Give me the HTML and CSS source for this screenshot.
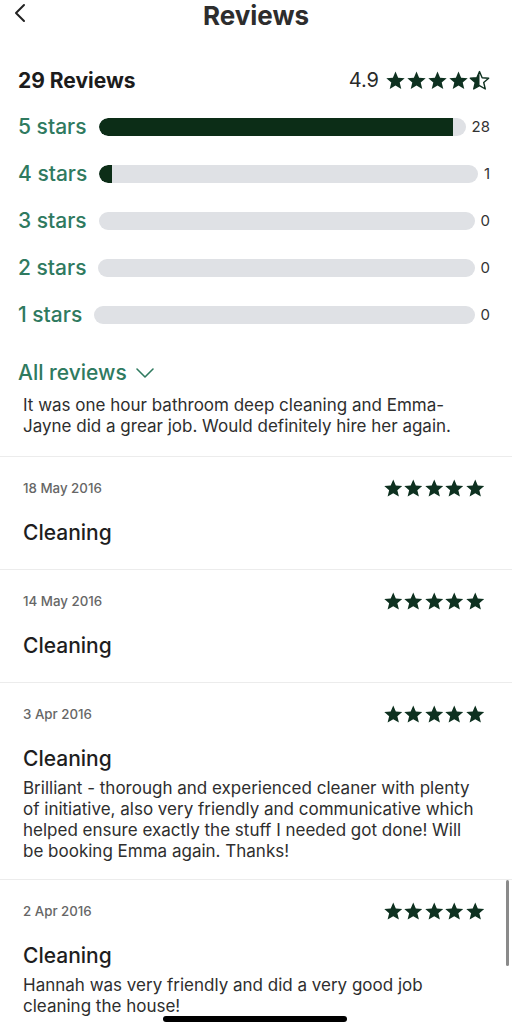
FILE: index.html
```html
<!DOCTYPE html>
<html lang="en">
<head>
    <meta charset="UTF-8">
    <meta name="viewport" content="width=device-width, initial-scale=1.0">
    <title>Reviews</title>
    <link rel="stylesheet" href="styles.css">
</head>
<body>
    <svg width="0" height="0" class="defs">
        <defs>
            <symbol id="star" viewBox="0 0 24 24">
                <path d="M12 1.8l3 7 7.5.6-5.7 4.9 1.8 7.4L12 17.8l-6.6 3.9 1.8-7.4L1.5 9.4 9 8.8z"/>
            </symbol>
            <clipPath id="halfClip">
                <rect x="0" y="0" width="12" height="24"/>
            </clipPath>
        </defs>
    </svg>

    <div class="topbar">
        <svg class="back" width="12" height="20" viewBox="0 0 12 20">
            <path d="M10 2L2 10l8 8" fill="none" stroke="#222" stroke-width="2" stroke-linecap="round" stroke-linejoin="round"/>
        </svg>
        <h1>Reviews</h1>
    </div>

    <div class="summary">
        <span class="total">29 Reviews</span>
        <span class="rating">
            4.9
            <span class="stars">
                <svg><use href="#star"/></svg>
                <svg><use href="#star"/></svg>
                <svg><use href="#star"/></svg>
                <svg><use href="#star"/></svg>
                <svg viewBox="0 0 24 24" class="half">
                    <path d="M12 1.8l3 7 7.5.6-5.7 4.9 1.8 7.4L12 17.8l-6.6 3.9 1.8-7.4L1.5 9.4 9 8.8z" fill="none" stroke="#0e3120" stroke-width="1.6" stroke-linejoin="round"/>
                    <path d="M12 1.8l3 7 7.5.6-5.7 4.9 1.8 7.4L12 17.8l-6.6 3.9 1.8-7.4L1.5 9.4 9 8.8z" clip-path="url(#halfClip)"/>
                </svg>
            </span>
        </span>
    </div>

    <div class="breakdown">
        <div class="bar-row">
            <span class="bar-label">5 stars</span>
            <div class="bar"><div class="bar-fill" style="width: 96.6%"></div></div>
            <span class="bar-count">28</span>
        </div>
        <div class="bar-row">
            <span class="bar-label">4 stars</span>
            <div class="bar"><div class="bar-fill" style="width: 3.4%"></div></div>
            <span class="bar-count">1</span>
        </div>
        <div class="bar-row">
            <span class="bar-label">3 stars</span>
            <div class="bar"><div class="bar-fill" style="width: 0%"></div></div>
            <span class="bar-count">0</span>
        </div>
        <div class="bar-row">
            <span class="bar-label">2 stars</span>
            <div class="bar"><div class="bar-fill" style="width: 0%"></div></div>
            <span class="bar-count">0</span>
        </div>
        <div class="bar-row">
            <span class="bar-label">1 stars</span>
            <div class="bar"><div class="bar-fill" style="width: 0%"></div></div>
            <span class="bar-count">0</span>
        </div>
    </div>

    <div class="filter">
        All reviews
        <svg width="20" height="12" viewBox="0 0 20 12">
            <path d="M2 2l8 8 8-8" fill="none" stroke="#2f7a5f" stroke-width="1.6" stroke-linecap="round" stroke-linejoin="round"/>
        </svg>
    </div>
    <p class="intro">It was one hour bathroom deep cleaning and Emma-<br>Jayne did a grear job. Would definitely hire her again.</p>

    <div class="review">
        <div class="review-head">
            <span class="date">18 May 2016</span>
            <span class="stars small">
                <svg><use href="#star"/></svg><svg><use href="#star"/></svg><svg><use href="#star"/></svg><svg><use href="#star"/></svg><svg><use href="#star"/></svg>
            </span>
        </div>
        <h2 class="review-title">Cleaning</h2>
    </div>

    <div class="review">
        <div class="review-head">
            <span class="date">14 May 2016</span>
            <span class="stars small">
                <svg><use href="#star"/></svg><svg><use href="#star"/></svg><svg><use href="#star"/></svg><svg><use href="#star"/></svg><svg><use href="#star"/></svg>
            </span>
        </div>
        <h2 class="review-title">Cleaning</h2>
    </div>

    <div class="review">
        <div class="review-head">
            <span class="date">3 Apr 2016</span>
            <span class="stars small">
                <svg><use href="#star"/></svg><svg><use href="#star"/></svg><svg><use href="#star"/></svg><svg><use href="#star"/></svg><svg><use href="#star"/></svg>
            </span>
        </div>
        <h2 class="review-title">Cleaning</h2>
        <p class="review-body">Brilliant - thorough and experienced cleaner with plenty of initiative, also very friendly and communicative which helped ensure exactly the stuff I needed got done! Will be booking Emma again. Thanks!</p>
    </div>

    <div class="review">
        <div class="review-head">
            <span class="date">2 Apr 2016</span>
            <span class="stars small">
                <svg><use href="#star"/></svg><svg><use href="#star"/></svg><svg><use href="#star"/></svg><svg><use href="#star"/></svg><svg><use href="#star"/></svg>
            </span>
        </div>
        <h2 class="review-title">Cleaning</h2>
        <p class="review-body">Hannah was very friendly and did a very good job cleaning the house!</p>
    </div>

    <div class="scrollbar"></div>
    <div class="home-indicator"></div>
</body>
</html>
```

FILE: styles.css
```css
body {
    margin: 0;
    font-family: 'Inter', 'Noto Sans', sans-serif;
    background: #fff;
    color: #222;
    height: 1024px;
    overflow: hidden;
}
.defs {
    position: absolute;
}
.topbar {
    height: 34px;
    display: flex;
    align-items: flex-start;
    justify-content: center;
    position: relative;
}
.back {
    position: absolute;
    left: 14px;
    top: 3px;
}
h1 {
    margin: 1px 0 0;
    font-size: 26px;
    line-height: 30px;
    font-weight: 700;
    color: #2d2d2d;
}
.summary {
    display: flex;
    justify-content: space-between;
    align-items: center;
    padding: 34px 22px 0 18px;
    height: 24px;
}
.total {
    font-size: 21px;
    font-weight: 700;
    color: #1c1c1c;
}
.rating {
    display: flex;
    align-items: center;
    gap: 6px;
    font-size: 20px;
    color: #2a2a2a;
}
.stars {
    display: flex;
    fill: #0e3120;
}
.stars svg {
    width: 21px;
    height: 21px;
}
.breakdown {
    margin-top: 11px;
    padding: 0 22px 0 18px;
}
.bar-row {
    display: flex;
    align-items: center;
    height: 47px;
}
.bar-label {
    font-size: 21px;
    font-weight: 500;
    color: #2f7a5f;
    margin-right: 12px;
    white-space: nowrap;
}
.bar {
    flex: 1;
    height: 18px;
    border-radius: 9px;
    background: #dfe1e5;
    overflow: hidden;
}
.bar-fill {
    height: 100%;
    background: #0c2d17;
    border-radius: 9px 0 0 9px;
}
.bar-count {
    margin-left: 6px;
    font-size: 15px;
    color: #333;
}
.filter {
    display: flex;
    align-items: center;
    gap: 8px;
    margin: 22px 0 0 18px;
    font-size: 21px;
    font-weight: 500;
    color: #2f7a5f;
}
.intro {
    margin: 10px 0 0 23px;
    font-size: 17px;
    line-height: 21px;
    color: #2e2e2e;
}
.review {
    border-top: 1px solid #ececec;
    padding: 22px 27px 17px 23px;
    margin-top: 19px;
}
.review + .review {
    margin-top: 0;
}
.review-head {
    display: flex;
    justify-content: space-between;
    align-items: center;
    height: 18px;
}
.date {
    font-size: 13.3px;
    font-weight: 500;
    color: #666;
}
.stars.small svg {
    width: 20.5px;
    height: 20.5px;
}
.review-title {
    margin: 23px 0 6px;
    font-size: 21px;
    line-height: 26px;
    font-weight: 500;
    color: #1e1e1e;
}
.review-body {
    margin: 0;
    font-size: 17px;
    line-height: 21px;
    color: #2e2e2e;
}
.scrollbar {
    position: fixed;
    right: 3px;
    top: 880px;
    width: 3px;
    height: 86px;
    border-radius: 2px;
    background: #8a8a8a;
}
.home-indicator {
    position: fixed;
    left: 163px;
    bottom: 2px;
    width: 184px;
    height: 6px;
    border-radius: 3px;
    background: #000;
}
```
